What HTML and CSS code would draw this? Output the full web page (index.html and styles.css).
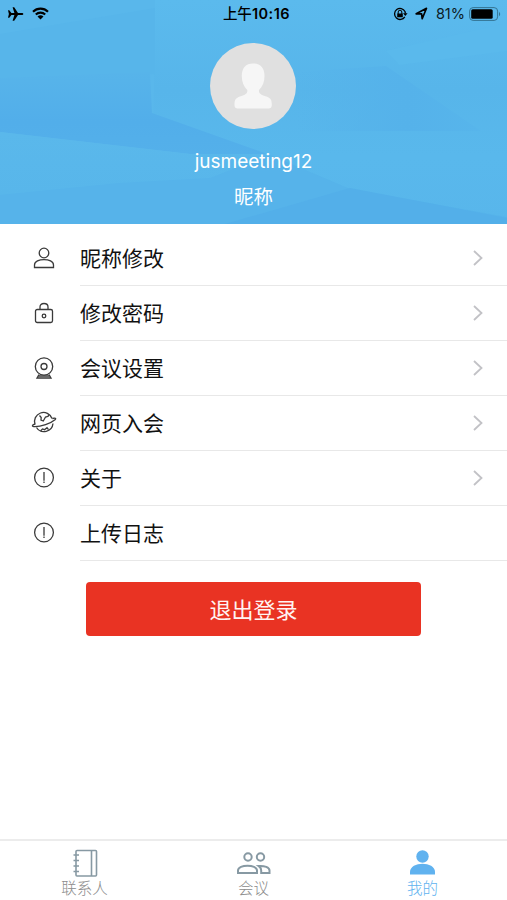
FILE: index.html
```
<!DOCTYPE html>
<html lang="zh-CN">
<head>
<meta charset="utf-8">
<title>我的</title>
<link rel="stylesheet" href="styles.css">
</head>
<body>
<header class="profile">
  <svg class="facets" viewBox="0 0 507 224" preserveAspectRatio="none" aria-hidden="true">
    <defs>
      <linearGradient id="band" x1="0" y1="0" x2="0" y2="1"><stop offset="0" stop-color="#57b4ea"/><stop offset=".6" stop-color="#52aeea"/><stop offset="1" stop-color="#54b0ea"/></linearGradient>
      <linearGradient id="right" x1="0" y1="0" x2="0" y2="1"><stop offset="0" stop-color="#5bbaed"/><stop offset=".4" stop-color="#57b5ea"/><stop offset=".7" stop-color="#59b8ec"/><stop offset="1" stop-color="#58b6eb"/></linearGradient>
      <linearGradient id="low" x1="0" y1="0" x2="0" y2="1"><stop offset="0" stop-color="#5ab8eb"/><stop offset="1" stop-color="#57b5ea"/></linearGradient>
      <linearGradient id="shade" x1="0" y1="0" x2="1" y2="0"><stop offset="0" stop-color="#55b2ea" stop-opacity="0"/><stop offset=".6" stop-color="#55b2ea"/><stop offset="1" stop-color="#57b5eb"/></linearGradient>
    </defs>
    <path fill="#59b7eb" d="M0 0h507v224H0z"/>
    <path fill="url(#right)" d="M155 0h352v224H152z"/>
    <path fill="#57b5ea" d="M0 34L155 8v66L0 79z"/>
    <path fill="url(#band)" d="M0 78l150-6 2 41 118 42-80-1L0 132z"/>
    <path fill="url(#low)" d="M0 132l190 22h80l80 35-170 35H0z"/>
    <path fill="#56b3ea" d="M0 195l120-12 90-5 60-23 80 34 157 28v7H0z"/>
    <path fill="#53afe9" d="M225 224l125-36 157 30v6z"/>
    <path fill="url(#shade)" d="M296 72l90-6 95 65H296z"/>
    <path fill="#5ab9ec" d="M386 51l121-28v28l-108 14z"/>
  </svg>
  <div class="status">
    <div class="status-left">
      <svg width="16" height="14" viewBox="0 0 16 14"><path d="M0 3.200h1.300L3.400 6h3L4.600.2h1.600L10 6h3.600c2.400 0 2.400 2 0 2H10l-3.800 5.800H4.600L6.400 8h-3l-2.100 2.800H0L.9 7z"/></svg>
      <svg class="wifi" width="17" height="13" viewBox="0 0 17 13"><g fill="none" stroke="#000" stroke-width="2.100"><path d="M1 4.700a10.700 10.700 0 0 1 15 0M3.800 7.500a6.800 6.800 0 0 1 9.400 0"/></g><path d="M5.500 9.500q3-2.300 6 0l-3 3z"/></svg>
    </div>
    <div class="clock"><span>上午</span>10:16</div>
    <div class="status-right">
      <svg width="15" height="14" viewBox="0 0 15 14"><path d="M11.800 9.800A5.500 5.500 0 1 1 12 4.500l.4 2" fill="none" stroke="#000" stroke-width="1.300"/><path d="M10 6.300h4.600L12.300 9zM4.200 6.500h5.600v3.700H4.200z"/><path d="M5.200 7V5a1.800 1.800 0 0 1 3.600 0v2" fill="none" stroke="#000"/></svg>
      <svg class="arrow" width="13" height="13" viewBox="0 0 13 13"><path d="M1.200 6.800L11.500 1.300 7.200 11.700 6.600 6.800z" fill="none" stroke="#000" stroke-width="1.700" stroke-linejoin="round"/></svg>
      <span class="percent">81%</span>
      <svg width="32" height="14" viewBox="0 0 32 14"><rect x=".6" y=".6" width="28" height="12.800" rx="3.500" fill="none" stroke="#347392" stroke-width="1"/><rect x="2.200" y="2.300" width="21.500" height="9.400" rx="1.500"/><path d="M30 4.700q2.400 2.300 0 4.600z" fill="#347392"/></svg>
    </div>
  </div>
  <svg class="avatar" viewBox="0 0 86 86"><circle cx="43" cy="43" r="43" fill="#e0e0e0"/><path fill="#f6f6f6" d="M43 20.500c7.500 0 11.500 4.500 11.500 12.500 0 6-2 10.500-5.500 14-.5 3.500 2 5 6.500 6.200 4.800 1.300 6.300 3.300 6.300 8.300 0 3-1 4-4 4H28.500c-3 0-4-1-4-4 0-5 1.500-7 6.300-8.300 4.500-1.200 7-2.700 6.500-6.200-3.500-3.500-5.500-8-5.500-14 0-8 4-12.500 11.200-12.500z"/></svg>
  <div class="account">jusmeeting12</div>
  <div class="nickname">昵称</div>
</header>
<main>
  <ul class="menu">
    <li><svg class="icon" viewBox="0 0 24 24"><circle cx="12" cy="7" r="4.800"/><path d="M2.500 21.500V19c0-7.300 19-7.300 19 0v2.500z"/></svg><div class="row"><span>昵称修改</span><svg class="chevron" viewBox="0 0 10 16"><path d="M1 1l7.500 7L1 15"/></svg></div></li>
    <li><svg class="icon" viewBox="0 0 24 24"><rect x="3.500" y="8.500" width="17" height="13" rx="1.700"/><path d="M8 8.500V6q0-3.500 4-3.500T16 6v2.500"/><circle cx="12" cy="15" r="1.800"/></svg><div class="row"><span>修改密码</span><svg class="chevron" viewBox="0 0 10 16"><path d="M1 1l7.500 7L1 15"/></svg></div></li>
    <li><svg class="icon" viewBox="0 0 24 24"><circle cx="12" cy="10.500" r="8.700"/><circle cx="12" cy="10.500" r="3"/><path d="M7 18.500l-2 3.500h14l-2-3.500M6 20h12"/></svg><div class="row"><span>会议设置</span><svg class="chevron" viewBox="0 0 10 16"><path d="M1 1l7.500 7L1 15"/></svg></div></li>
    <li><svg class="icon" viewBox="0 0 24 24"><path d="M3 13.500A9 9 0 0 1 20 7.500M21 12.500a9 9 0 0 1-16.500 4"/><path d="M3.200 13C-.5 14-.5 15.700 3 15.700c6 0 15.500-3.200 20-7 1.500-1.500.5-2-2.700-1.200M7.500 4.500l1.700 2L9 9l2.300 1L13.500 6l2.700-.7.300-1.500M8.500 20l2-2 2 .7 2.500-2 1.500 2"/></svg><div class="row"><span>网页入会</span><svg class="chevron" viewBox="0 0 10 16"><path d="M1 1l7.500 7L1 15"/></svg></div></li>
    <li><svg class="icon" viewBox="0 0 24 24"><circle cx="12" cy="11.500" r="9.400"/><path d="M12 6v8.800M12 15.500v1.500"/></svg><div class="row"><span>关于</span><svg class="chevron" viewBox="0 0 10 16"><path d="M1 1l7.500 7L1 15"/></svg></div></li>
    <li><svg class="icon" viewBox="0 0 24 24"><circle cx="12" cy="11.500" r="9.400"/><path d="M12 6v8.800M12 15.500v1.500"/></svg><div class="row"><span>上传日志</span></div></li>
  </ul>
  <button class="logout" type="button">退出登录</button>
</main>
<nav class="tabs">
  <a class="tab"><svg width="36" height="30" viewBox="0 0 36 30"><g fill="none" stroke="#8799a3" stroke-width="1.600"><rect x="9" y="2.500" width="20.500" height="25.500" rx="1"/><path d="M24.500 2.500V28M6.500 7H12M6.500 12.500H12M6.500 18H12M6.500 23.500H12"/></g></svg><span>联系人</span></a>
  <a class="tab"><svg width="36" height="30" viewBox="0 0 36 30"><g fill="none" stroke="#8799a3" stroke-width="2"><circle cx="12" cy="9" r="3.700"/><circle cx="24.500" cy="9" r="3.700"/><path d="M2 25v-2.500c0-6.500 19-6.500 19 0V25zM22.500 18c6-.5 11 1.500 11 4.500V25h-8.300v-2.500c0-2-1-3.300-2.700-4.500z"/></g></svg><span>会议</span></a>
  <a class="tab active"><svg width="36" height="30" viewBox="0 0 36 30"><g fill="#60b2ef"><circle cx="17.500" cy="8.500" r="6.200"/><path d="M5 26.500V24c0-11 25-11 25 0v2.500z"/></g></svg><span>我的</span></a>
</nav>
</body>
</html>
```
FILE: styles.css
```
* { box-sizing: border-box; }
body {
  margin: 0;
  height: 900px;
  display: flex;
  flex-direction: column;
  overflow: hidden;
  background: #fff;
  color: #111;
  font-family: Inter, "Noto Sans CJK SC", sans-serif;
}
svg { display: block; flex: none; }
.profile {
  position: relative;
  height: 224px;
  flex: none;
  display: flex;
  flex-direction: column;
  align-items: center;
  background: #59b7eb;
  color: #fff;
}
.facets { position: absolute; inset: 0; width: 100%; height: 100%; }
.status, .avatar, .account, .nickname { position: relative; }
.status {
  width: 100%;
  height: 27px;
  padding: 0 6px 0 8px;
  display: grid;
  grid-template-columns: 1fr auto 1fr;
  align-items: center;
  color: #0b1c26;
}
.status-left, .status-right { display: flex; align-items: center; }
.status-right { justify-content: flex-end; }
.wifi { margin-left: 8px; }
.clock { padding-left: 4px; color: #000; font-size: 14.500px; font-weight: 600; letter-spacing: .5px; line-height: 27px; }
.clock span { font-weight: 500; letter-spacing: 0; }
.arrow { margin: 0 8px 0 7px; }
.percent { margin-right: 4px; font-size: 14.500px; line-height: 27px; }
.avatar { width: 86px; height: 86px; margin: 16px 1px 0 0; }
.account { margin-top: 19px; font-size: 19px; line-height: 28px; }
.nickname { margin-top: 6px; font-size: 19.500px; line-height: 30px; }
main { flex: 1; display: flex; flex-direction: column; align-items: center; }
.menu { width: 100%; margin: 0; padding: 7px 0 0; list-style: none; }
.menu li { height: 55px; padding-left: 32px; display: flex; align-items: center; }
.icon { width: 24px; height: 24px; margin: 0 24px 1px 0; fill: none; stroke: #3a3a3a; stroke-width: 1.300; overflow: visible; }
.row {
  flex: 1;
  height: 55px;
  padding-right: 24px;
  display: flex;
  align-items: center;
  justify-content: space-between;
  border-bottom: 1px solid #e8e8e8;
  font-size: 21px;
}
.row span { padding-bottom: 2px; }
.chevron { width: 10px; height: 16px; fill: none; stroke: #c2c2c6; stroke-width: 1.800; }
.logout {
  width: 335px;
  height: 54px;
  margin-top: 21px;
  padding: 0 0 2px;
  border: 0;
  border-radius: 4px;
  background: #e93323;
  color: #fff4f2;
  font: 400 22px "Noto Sans CJK SC", sans-serif;
}
.tabs { height: 61px; flex: none; display: flex; border-top: 2px solid #ececec; }
.tab { flex: 1; padding-top: 7px; display: flex; flex-direction: column; align-items: center; color: #8c8c8c; font-size: 15.500px; font-weight: 300; line-height: 21px; }
.active { color: #60b2ef; }
```
